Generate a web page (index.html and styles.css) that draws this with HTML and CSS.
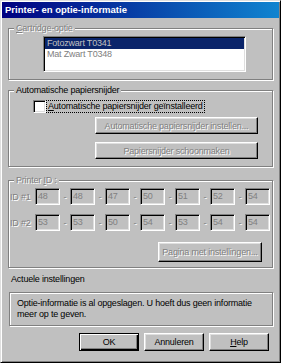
FILE: index.html
```html
<!DOCTYPE html>
<html lang="nl">
<head>
  <meta charset="UTF-8" />
  <title>Printer- en optie-informatie</title>
  <link rel="stylesheet" href="styles.css">
</head>
<body>
  <div class="window">
    <div class="titlebar">Printer- en optie-informatie</div>
    <div class="content">

      <fieldset class="group">
        <legend class="disabled"><u>C</u>artridge-optie</legend>
        <div class="cartridge-body">
          <ul class="listbox">
            <li class="selected">Fotozwart T0341</li>
            <li>Mat Zwart T0348</li>
          </ul>
        </div>
      </fieldset>

      <fieldset class="group group-cutter">
        <legend>Automatische papiersnijder</legend>
        <div class="cutter-body">
          <div class="check-row">
            <span class="checkbox"></span>
            <span class="focus"><u>A</u>utomatische papiersnijder geïnstalleerd</span>
          </div>
          <div class="cutter-buttons">
            <button class="btn btn-wide" disabled>Automatische papiersnijder instellen...</button>
            <button class="btn btn-wide" disabled>Papiersnijder schoonmaken</button>
          </div>
        </div>
      </fieldset>

      <fieldset class="group group-id">
        <legend class="disabled">Printer <u>I</u>D :</legend>
        <div class="id-body">
          <div class="id-row">
            <span class="id-label disabled">ID #1</span>
            <span class="field">48</span><span class="sep disabled">-</span>
            <span class="field">48</span><span class="sep disabled">-</span>
            <span class="field">47</span><span class="sep disabled">-</span>
            <span class="field">50</span><span class="sep disabled">-</span>
            <span class="field">51</span><span class="sep disabled">-</span>
            <span class="field">52</span><span class="sep disabled">-</span>
            <span class="field">54</span>
          </div>
          <div class="id-row">
            <span class="id-label disabled">ID #2</span>
            <span class="field">53</span><span class="sep disabled">-</span>
            <span class="field">53</span><span class="sep disabled">-</span>
            <span class="field">50</span><span class="sep disabled">-</span>
            <span class="field">54</span><span class="sep disabled">-</span>
            <span class="field">53</span><span class="sep disabled">-</span>
            <span class="field">54</span><span class="sep disabled">-</span>
            <span class="field">54</span>
          </div>
          <button class="btn btn-page" disabled>Pagina met instellingen...</button>
        </div>
      </fieldset>

      <div class="current-label">Actuele instellingen</div>
      <div class="info-box">
        Optie-informatie is al opgeslagen. U hoeft dus geen informatie<br>
        meer op te geven.
      </div>

      <div class="footer">
        <button class="btn btn-default">OK</button>
        <button class="btn">Annuleren</button>
        <button class="btn"><u>H</u>elp</button>
      </div>

    </div>
  </div>
</body>
</html>
```

FILE: styles.css
```css
html, body {
  margin: 0;
}
body {
  background: #c0c0c0;
  font-family: "Liberation Sans", Arial, sans-serif;
  font-size: 9px;
  letter-spacing: -0.2px;
  color: #000;
}
.window {
  width: 281px;
  height: 363px;
  box-sizing: border-box;
  padding: 1px;
  border: 1px solid;
  border-color: #dfdfdf #000 #000 #dfdfdf;
  box-shadow: inset 1px 1px #fff, inset -1px -1px #808080;
  background: #c0c0c0;
}
.titlebar {
  height: 16px;
  line-height: 16px;
  padding-left: 3px;
  background: linear-gradient(to right, #000080, #1084d0);
  color: #fff;
  font-weight: bold;
  font-size: 9.5px;
  letter-spacing: 0;
}
.content {
  padding: 5px 6px 0;
}
.disabled {
  color: #808080;
  text-shadow: 1px 1px #fff;
}

/* group boxes */
.group {
  margin: 0;
  padding: 0;
  min-width: 0;
  border: 1px solid #808080;
  box-shadow: 1px 1px #fff, inset 1px 1px #fff;
}
.group legend {
  margin-left: 5px;
  padding: 0 2px;
  line-height: 11px;
  background: #c0c0c0;
}
.group-cutter {
  margin-top: 5px;
}
.group-id {
  margin-top: 8px;
}

/* cartridge list */
.cartridge-body {
  padding: 2px 0 7px 34px;
}
.listbox {
  list-style: none;
  margin: 0;
  padding: 1px;
  width: 203px;
  height: 36px;
  box-sizing: border-box;
  background: #fff;
  border: 1px solid;
  border-color: #808080 #fff #fff #808080;
  box-shadow: inset 1px 1px #000, inset -1px -1px #dfdfdf;
}
.listbox li {
  height: 11px;
  line-height: 11px;
  padding-left: 2px;
  color: #808080;
}
.listbox li.selected {
  background: #0a246a;
  color: #c0c0c0;
}

/* cutter */
.cutter-body {
  padding: 4px 0 7px 24px;
}
.check-row {
  display: flex;
  align-items: center;
  height: 13px;
}
.checkbox {
  width: 13px;
  height: 13px;
  box-sizing: border-box;
  background: #fff;
  border: 1px solid;
  border-color: #808080 #fff #fff #808080;
  box-shadow: inset 1px 1px #000, inset -1px -1px #dfdfdf;
}
.focus {
  padding: 0 1px;
  line-height: 11px;
  border: 1px dotted #000;
}
.cutter-buttons {
  display: flex;
  flex-direction: column;
  gap: 8px;
  margin: 4px 0 0 62px;
}

/* buttons */
.btn {
  margin: 0;
  padding: 0;
  height: 18px;
  width: 60px;
  font: inherit;
  letter-spacing: inherit;
  color: #000;
  background: #c0c0c0;
  border: 1px solid;
  border-color: #fff #000 #000 #fff;
  box-shadow: inset -1px -1px #808080, inset 1px 1px #dfdfdf;
}
.btn:disabled {
  color: #808080;
  text-shadow: 1px 1px #fff;
}
.btn-wide {
  width: 163px;
  height: 17px;
}
.btn-default {
  border-color: #000;
  box-shadow: inset 1px 1px #fff, inset -1px -1px #000, inset -2px -2px #808080;
}

/* printer id */
.id-body {
  padding: 2px 0 5px 1px;
}
.id-row {
  display: flex;
  align-items: center;
  height: 17px;
}
.id-row + .id-row {
  margin-top: 9px;
}
.id-label {
  width: 25px;
}
.field {
  width: 25px;
  height: 17px;
  box-sizing: border-box;
  padding-left: 2px;
  line-height: 15px;
  color: #808080;
  border: 1px solid;
  border-color: #808080 #fff #fff #808080;
  box-shadow: inset 1px 1px #000, inset -1px -1px #dfdfdf;
}
.sep {
  width: 10px;
  text-align: center;
}
.btn-page {
  display: block;
  width: 104px;
  height: 20px;
  margin: 11px 0 0 148px;
}

/* bottom */
.current-label {
  margin-top: 6px;
  padding-left: 3px;
  line-height: 11px;
}
.info-box {
  margin: 7px 0 0 1px;
  height: 34px;
  box-sizing: border-box;
  padding: 5px 7px 0;
  line-height: 11px;
  border: 1px solid #808080;
  box-shadow: 1px 1px #fff, inset 1px 1px #fff;
}
.footer {
  display: flex;
  justify-content: flex-end;
  gap: 5px;
  margin-top: 7px;
  padding-right: 4px;
}
```
